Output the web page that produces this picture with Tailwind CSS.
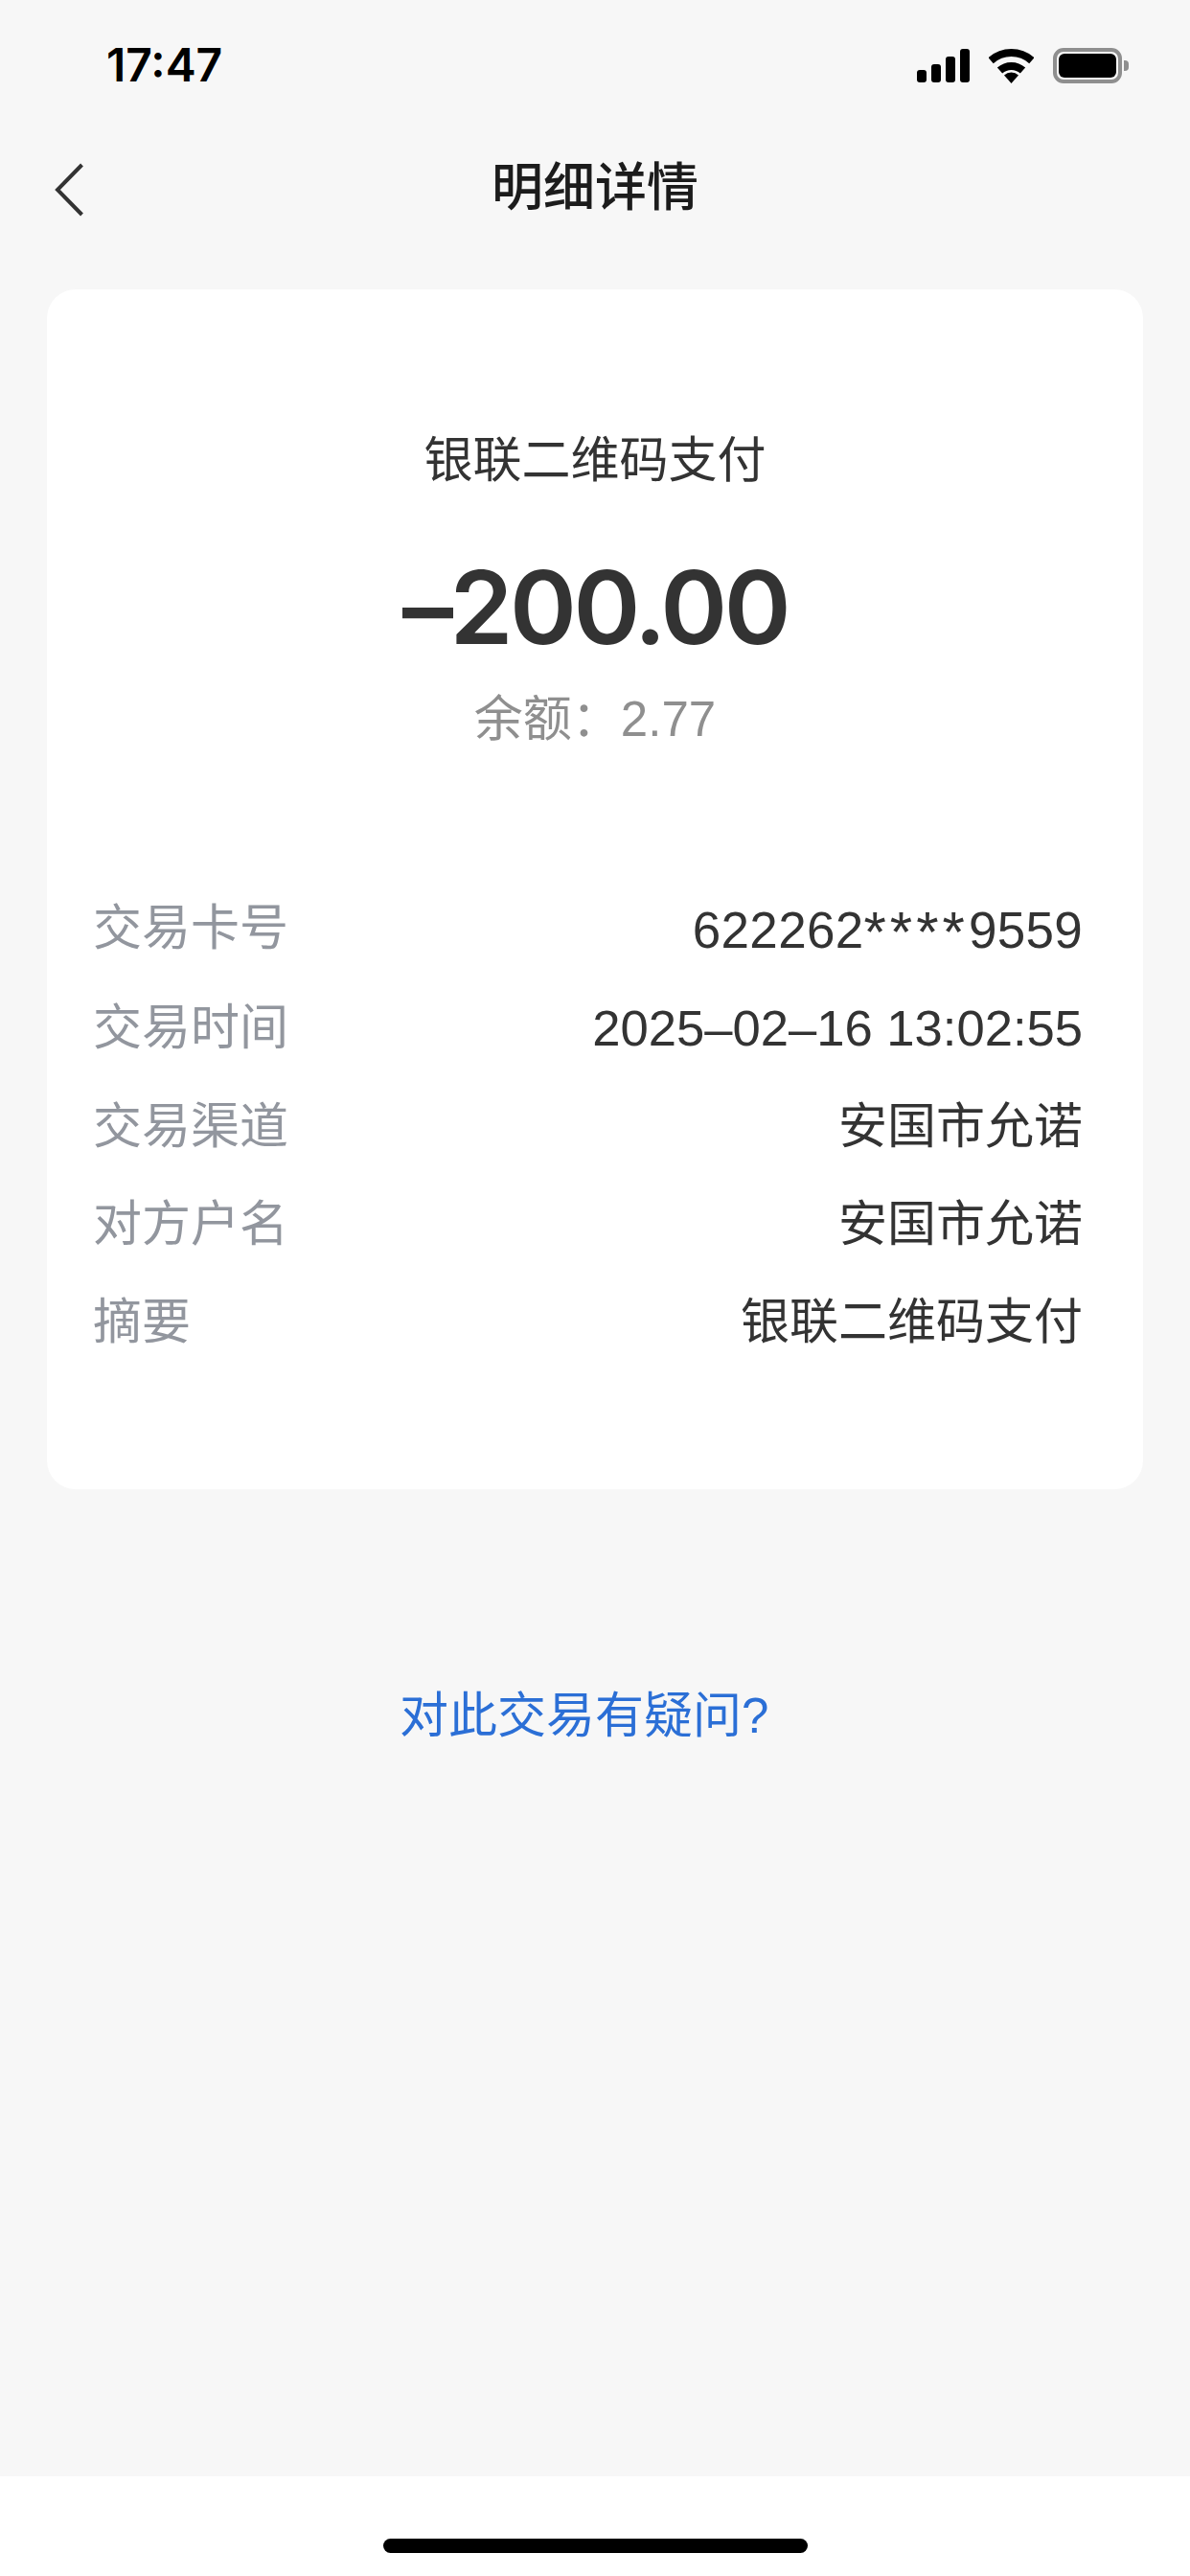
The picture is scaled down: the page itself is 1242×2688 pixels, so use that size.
<!DOCTYPE html>
<html lang="zh-CN">
<head>
  <meta charset="UTF-8">
  <meta name="viewport" content="width=device-width, initial-scale=1.0">
  <title>明细详情</title>
  <script src="https://cdn.jsdelivr.net/npm/@tailwindcss/browser@4"></script>
</head>
<body class="bg-[#f7f7f7] font-['Liberation_Sans','Noto_Sans_CJK_SC',sans-serif]">
  <div class="w-[1242px] h-[2688px] flex flex-col overflow-hidden">

    <!-- Status bar -->
    <div class="h-[136px] shrink-0 flex items-center justify-between pl-[111px] pr-[64px]">
      <span class="font-['Inter',sans-serif] text-[48px] leading-none font-semibold text-black">17:47</span>
      <div class="flex items-center">
        <div class="flex items-end gap-[5px] h-[35px]">
          <div class="w-[10px] h-[13px] rounded-[3px] bg-black"></div>
          <div class="w-[10px] h-[19px] rounded-[3px] bg-black"></div>
          <div class="w-[10px] h-[27px] rounded-[3px] bg-black"></div>
          <div class="w-[10px] h-[35px] rounded-[3px] bg-black"></div>
        </div>
        <svg class="ml-[20px]" width="47" height="37" viewBox="0 0 47 37">
          <path d="M2.1 13.2A32 32 0 0 1 44.9 13.2" fill="none" stroke="#000" stroke-width="8"/>
          <path d="M11.5 23.6A18 18 0 0 1 35.5 23.6" fill="none" stroke="#000" stroke-width="8"/>
          <path d="M23.5 37L16 28.5A11 11 0 0 1 31 28.5Z" fill="#000"/>
        </svg>
        <div class="ml-[20px] flex items-center">
          <div class="w-[72px] h-[37px] rounded-[11px] border-[4px] border-[#8f8f8f] p-[2px]">
            <div class="w-full h-full rounded-[6px] bg-black"></div>
          </div>
          <div class="ml-[2px] w-[5px] h-[11px] rounded-r-[4px] bg-[#8f8f8f]"></div>
        </div>
      </div>
    </div>

    <!-- Nav -->
    <div class="h-[118px] shrink-0 grid grid-cols-[1fr_auto_1fr] items-center">
      <div class="pl-[57px] pt-[6px]">
        <svg class="block" width="32" height="56" viewBox="0 0 32 56">
          <path d="M28.5 2L3 28L28.5 54" fill="none" stroke="#333" stroke-width="4"/>
        </svg>
      </div>
      <h1 class="mt-[2px] text-[54px] leading-[62px] font-medium text-[#1c1c1c]">明细详情</h1>
      <div></div>
    </div>

    <!-- Detail card -->
    <div class="mt-[48px] ml-[49px] mr-[49px] h-[1252px] shrink-0 rounded-[30px] bg-white pt-[149px]">
      <div class="text-center text-[51px] leading-[60px] text-[#333]">银联二维码支付</div>
      <div class="mt-[63px] text-center font-['Inter','Liberation_Sans',sans-serif] text-[106px] leading-[120px] font-semibold text-[#333] tracking-[-3.5px]">–200.00</div>
      <div class="mt-[27px] text-center text-[51px] leading-[60px] text-[#8f8f8f]">余额：2.77</div>

      <div class="mt-[158px] ml-[48px] mr-[63px] flex flex-col gap-[42.3px] text-[51px] leading-[60px]">
        <div class="flex justify-between">
          <span class="text-[#92969e]">交易卡号</span>
          <span class="text-[53px] text-[#333] tracking-[0.3px]">622262<span class="relative top-[4px] text-[60px] leading-none tracking-[4px]">****</span>9559</span>
        </div>
        <div class="flex justify-between">
          <span class="text-[#92969e]">交易时间</span>
          <span class="text-[52.6px] text-[#333]">2025–02–16 13:02:55</span>
        </div>
        <div class="flex justify-between">
          <span class="text-[#92969e]">交易渠道</span>
          <span class="text-[#333]">安国市允诺</span>
        </div>
        <div class="flex justify-between">
          <span class="text-[#92969e]">对方户名</span>
          <span class="text-[#333]">安国市允诺</span>
        </div>
        <div class="flex justify-between">
          <span class="text-[#92969e]">摘要</span>
          <span class="text-[#333]">银联二维码支付</span>
        </div>
      </div>
    </div>

    <!-- Question link -->
    <div class="mt-[207px] pl-[417px] text-[51px] leading-[60px] text-[#2b6fd6]">对此交易有疑问?</div>

    <!-- Home indicator -->
    <div class="mt-auto h-[104px] shrink-0 bg-white pt-[65px] flex justify-center">
      <div class="w-[443px] h-[15px] rounded-[8px] bg-black"></div>
    </div>
  </div>
</body>
</html>
